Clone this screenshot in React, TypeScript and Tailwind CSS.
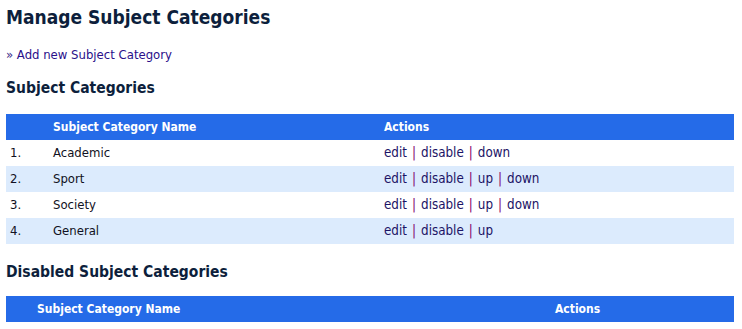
const rows = [
  { n: "1.", name: "Academic", up: false, down: true },
  { n: "2.", name: "Sport", up: true, down: true },
  { n: "3.", name: "Society", up: true, down: true },
  { n: "4.", name: "General", up: true, down: false },
];

function Sep() {
  return <span className="px-[5px] text-[#82006e]">|</span>;
}

function Actions({ up, down }: { up: boolean; down: boolean }) {
  return (
    <span className="text-[13.3px]">
      <a className="text-[#1c1466]">edit</a>
      <Sep />
      <a className="text-[#1c1466]">disable</a>
      {up && (
        <>
          <Sep />
          <a className="text-[#1c1466]">up</a>
        </>
      )}
      {down && (
        <>
          <Sep />
          <a className="text-[#1c1466]">down</a>
        </>
      )}
    </span>
  );
}

export default function App() {
  return (
    <div className="w-[742px] h-[329px] overflow-hidden bg-white px-[6px] pr-[8px] font-['DejaVu_Sans_Condensed','DejaVu_Sans',sans-serif] text-[13px] text-[#111122]">
      <h1 className="pt-[4px] h-[34px] text-[19px] leading-[26px] font-bold text-[#0d1f3c]">
        Manage Subject Categories
      </h1>
      <div className="mt-[11px] h-[20px] leading-[20px] text-[#2a0f8a]">
        <span className="text-[#3a2a8a]">»</span> Add new Subject Category
      </div>
      <h3 className="mt-[11px] h-[24px] leading-[24px] text-[15.5px] font-bold text-[#0d1f3c]">
        Subject Categories
      </h3>
      <div className="mt-[14px]">
        <div className="grid grid-cols-[43px_331px_1fr] h-[26px] items-center bg-[#256be8] text-white text-[12px] font-bold">
          <div className="px-1"></div>
          <div className="px-1">Subject Category Name</div>
          <div className="px-1">Actions</div>
        </div>
        {rows.map((r, i) => (
          <div
            key={r.n}
            className={
              "grid grid-cols-[43px_331px_1fr] h-[26px] items-center " +
              (i % 2 === 1 ? "bg-[#dcebfd]" : "bg-white")
            }
          >
            <div className="px-1">{r.n}</div>
            <div className="px-1">{r.name}</div>
            <div className="px-1">
              <Actions up={r.up} down={r.down} />
            </div>
          </div>
        ))}
      </div>
      <h3 className="mt-[16px] h-[24px] leading-[24px] text-[15.5px] font-bold text-[#0d1f3c]">
        Disabled Subject Categories
      </h3>
      <div className="mt-[12px]">
        <div className="grid grid-cols-[27px_518px_1fr] h-[26px] items-center bg-[#256be8] text-white text-[12px] font-bold">
          <div className="px-1"></div>
          <div className="px-1">Subject Category Name</div>
          <div className="px-1">Actions</div>
        </div>
      </div>
    </div>
  );
}
